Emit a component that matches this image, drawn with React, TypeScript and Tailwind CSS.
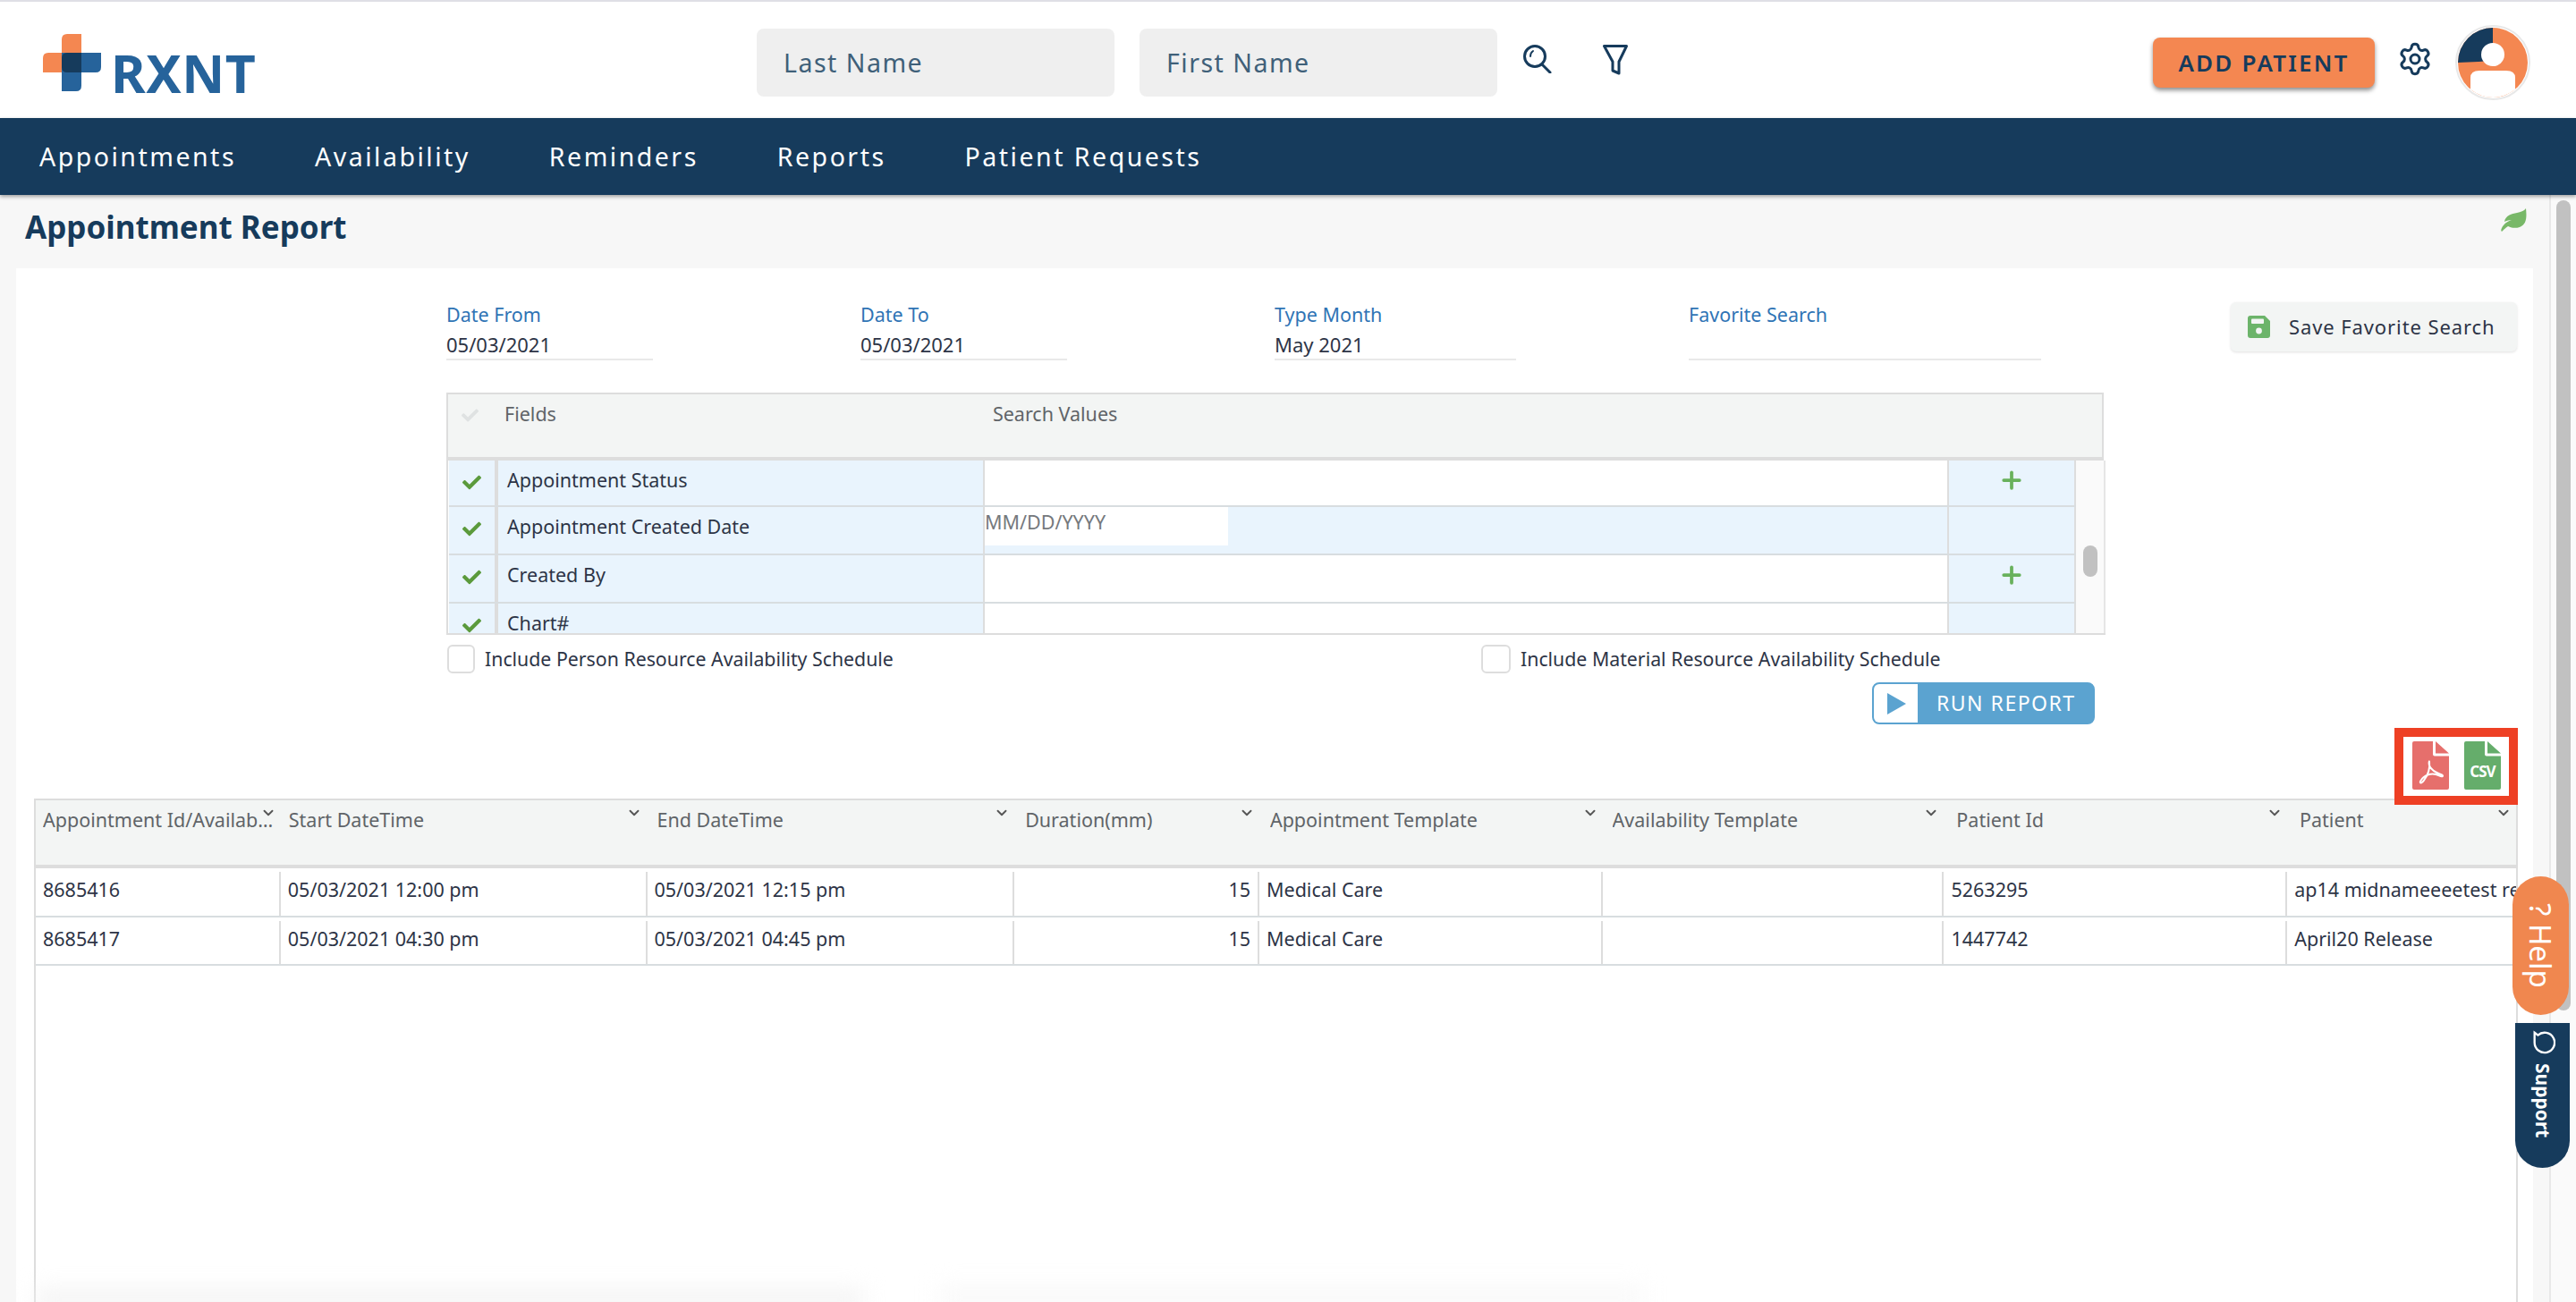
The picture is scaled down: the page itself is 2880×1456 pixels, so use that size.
import { ChevronDown, Plus, Settings } from "lucide-react";
import { FaCheck } from "react-icons/fa";

const dataCols = [
    { title: "Appointment Id/Availability", width: "w-[274px]", pad: "pl-[8px]" },
    { title: "Start DateTime", width: "w-[410px]", pad: "pl-[9px]" },
    { title: "End DateTime", width: "w-[411px]", pad: "pl-[11px]" },
    { title: "Duration(mm)", width: "w-[274px]", pad: "pl-[12px]" },
    { title: "Appointment Template", width: "w-[384px]", pad: "pl-[12px]" },
    { title: "Availability Template", width: "w-[382px]", pad: "pl-[11px]" },
    { title: "Patient Id", width: "w-[384px]", pad: "pl-[14px]" },
    { title: "Patient", width: "w-[256px]", pad: "pl-[14px]" },
];

const dataRows = [
    ["8685416", "05/03/2021 12:00 pm", "05/03/2021 12:15 pm", "15", "Medical Care", "", "5263295", "ap14 midnameeeetest review"],
    ["8685417", "05/03/2021 04:30 pm", "05/03/2021 04:45 pm", "15", "Medical Care", "", "1447742", "April20 Release"],
];

const searchRows = [
    { name: "Appointment Status", add: true, date: false, height: "h-[52px]" },
    { name: "Appointment Created Date", add: false, date: true, height: "h-[54px]" },
    { name: "Created By", add: true, date: false, height: "h-[54px]" },
    { name: "Chart#", add: false, date: false, height: "h-[54px]" },
];

const navItems = ["Appointments", "Availability", "Reminders", "Reports", "Patient Requests"];

const Field = ({ label, value, width, col }: { label: string; value: string; width: string; col: string }) => (
    <div className={col}>
        <div className={width}>
            <p className="h-[26px] text-[21.5px] leading-[26px] text-[#2f74b5]">{label}</p>
            <p className="mt-[4px] h-[34px] border-b-2 border-[#e9e9e9] text-[22px] leading-[32px] text-[#2d3446]">{value}</p>
        </div>
    </div>
);

const Logo = () => (
    <div className="flex items-end">
        <svg width="65" height="64" viewBox="0 0 65 64">
            <path d="M21 21V6Q21 0 27 0H43V43H0V27Q0 21 6 21Z" fill="#f48751" />
            <path d="M21 21H65V37Q65 43 59 43H43V58Q43 64 37 64H21Z" fill="#26639b" />
            <path d="M27 21H43V43H27Q21 43 21 37V27Q21 21 27 21Z" fill="#163b5c" />
        </svg>
        <span className="ml-[11px] h-[42px] text-[59px] leading-[42px] font-bold tracking-[0.5px] text-[#26639b]">RXNT</span>
    </div>
);

const SearchIcon = () => (
    <svg width="32" height="32" viewBox="0 0 32 32" fill="none" stroke="#163b5c" strokeWidth="3" strokeLinecap="round">
        <circle cx="13" cy="13" r="11.5" />
        <path d="M21 22L30 31" />
        <path d="M8 13Q8 9 11 7" strokeWidth="2" />
    </svg>
);

const FilterIcon = () => (
    <svg width="28" height="34" viewBox="0 0 28 34" fill="none" stroke="#163b5c" strokeWidth="3" strokeLinejoin="round">
        <path d="M1.5 1.5H26.5L18 19V32L11 29V19Z" />
    </svg>
);

const LeafIcon = () => (
    <svg width="30" height="26" viewBox="0 0 30 26">
        <path
            d="M28 0C29 10 29 18 21 21C15 23 10 21 8 20C5 22 3 24 1 26C0 25 0 24 1 22C3 18 6 15 12 13C8 13 6 14 4 15C5 8 12 6 18 5C22 4 26 3 28 0Z"
            fill="#78b868"
        />
    </svg>
);

const SaveIcon = () => (
    <svg width="25" height="25" viewBox="0 0 25 25">
        <path d="M3 0H19L25 6V22Q25 25 22 25H3Q0 25 0 22V3Q0 0 3 0Z" fill="#6cb46a" />
        <rect x="4" y="3.5" width="14" height="5.5" rx="1" fill="#f3f5f4" />
        <circle cx="12.5" cy="17" r="3.4" fill="#f3f5f4" />
    </svg>
);

const Avatar = () => (
    <svg width="84" height="86" viewBox="0 0 84 86">
        <circle cx="42" cy="43" r="41" fill="#fff" stroke="#e8e8e8" strokeWidth="2" />
        <circle cx="42" cy="43" r="39" fill="#f48751" />
        <path d="M42 4A39 39 0 0 0 3 43L26 42Q42 42 42 30Z" fill="#163b5c" />
        <ellipse cx="42" cy="34" rx="13" ry="13" fill="#fff" />
        <path d="M17 73V60Q17 52 27 52H57Q67 52 67 60V73Q55 82 42 82Q29 82 17 73Z" fill="#fff" />
    </svg>
);

const PdfIcon = () => (
    <svg width="41" height="54" viewBox="0 0 41 52" preserveAspectRatio="none">
        <path d="M2 0H23V14Q23 16 25 16H41V50Q41 52 39 52H2Q0 52 0 50V2Q0 0 2 0Z" fill="#e66f6c" />
        <path d="M26 0L41 13H26Z" fill="#e66f6c" />
        <path d="M19 21C17 27 23 33 33 36C35 37 34 39 30 37C22 33 13 36 9 43C8 46 11 45 13 42C17 37 20 29 19 21Z" fill="none" stroke="#fff" strokeWidth="2" />
    </svg>
);

const CsvIcon = () => (
    <div className="relative h-[54px] w-[41px]">
        <svg width="41" height="54" viewBox="0 0 41 52" preserveAspectRatio="none">
            <path d="M2 0H23V14Q23 16 25 16H41V50Q41 52 39 52H2Q0 52 0 50V2Q0 0 2 0Z" fill="#65ad6b" />
            <path d="M26 0L41 13H26Z" fill="#65ad6b" />
        </svg>
        <span className="absolute left-0 top-[24px] w-full text-center text-[17px] leading-[20px] font-bold tracking-[-1px] text-white">CSV</span>
    </div>
);

export default function App() {
    return (
        <div className="relative flex h-[1456px] w-[2880px] flex-col overflow-hidden bg-[#f7f7f7] font-['Noto_Sans',sans-serif] text-[#2d3446]">
            <div className="h-[2px] bg-[#dfdfe6]" />

            {/* header */}
            <header className="flex h-[130px] items-center bg-white pt-[6px]">
                <div className="ml-[48px] w-[798px]">
                    <Logo />
                </div>
                <div className="flex h-[76px] w-[400px] items-center rounded-lg bg-[#efefef] pl-[30px] text-[28.5px] tracking-[1.5px] text-[#3f6079]">Last Name</div>
                <div className="ml-[28px] flex h-[76px] w-[400px] items-center rounded-lg bg-[#efefef] pl-[30px] text-[28.5px] tracking-[1.5px] text-[#3f6079]">First Name</div>
                <div className="-mt-[7px] ml-[29px] flex items-start gap-[57px]">
                    <SearchIcon />
                    <FilterIcon />
                </div>
                <div className="ml-[587px] flex h-[56px] w-[248px] items-center justify-center rounded-lg bg-[#f48751] text-[26px] font-semibold tracking-[2.2px] text-[#163b5c] shadow-[0_3px_5px_rgba(0,0,0,0.45)]">ADD PATIENT</div>
                <Settings className="-mt-[8px] ml-[25px] text-[#163b5c]" size={40} strokeWidth={1.8} />
                <div className="ml-[25px]">
                    <Avatar />
                </div>
            </header>

            {/* nav */}
            <nav className="z-10 flex h-[86px] items-center gap-[88px] bg-[#163b5c] pl-[44px] text-[28.5px] tracking-[2.5px] text-white shadow-[0_2px_4px_rgba(0,0,0,0.35)]">
                {navItems.map((item) => (
                    <span key={item}>{item}</span>
                ))}
            </nav>

            <div className="flex min-h-0 flex-1">
                <main className="flex w-[2850px] flex-col">
                    <div className="flex h-[82px] items-start justify-between pl-[28px] pr-[24px]">
                        <h1 className="mt-[14px] text-[35px] leading-[44px] font-bold text-[#163b5c]">Appointment Report</h1>
                        <div className="mt-[15px]">
                            <LeafIcon />
                        </div>
                    </div>

                    <section className="relative ml-[18px] flex w-[2814px] flex-1 flex-col overflow-hidden bg-white">
                        {/* filter fields */}
                        <div className="flex pt-[39px] pl-[481px]">
                            <Field col="w-[463px]" width="w-[231px]" label="Date From" value="05/03/2021" />
                            <Field col="w-[463px]" width="w-[231px]" label="Date To" value="05/03/2021" />
                            <Field col="w-[463px]" width="w-[270px]" label="Type Month" value="May 2021" />
                            <Field col="w-[606px]" width="w-[394px]" label="Favorite Search" value="" />
                            <button className="-mt-[1px] flex h-[55px] w-[320px] items-center gap-[21px] rounded-md bg-[#f3f5f4] pl-[19px] text-[22px] tracking-[0.9px] text-[#2d3446] shadow-[0_1px_3px_rgba(0,0,0,0.12)]">
                                <SaveIcon />
                                Save Favorite Search
                            </button>
                        </div>

                        {/* search table */}
                        <div className="ml-[481px] mt-[36px] w-[1855px] text-[21.5px]">
                            <div className="flex h-[76px] w-[1853px] items-start border-2 border-b-4 border-[#dddddd] bg-[#f3f5f4] text-[#606468]">
                                <FaCheck className="ml-[15px] mt-[14px] text-[#dfe2e2]" size={19} />
                                <span className="ml-[29px] mt-[6px]">Fields</span>
                                <span className="ml-[488px] mt-[6px]">Search Values</span>
                            </div>
                            <div className="flex h-[195px] overflow-hidden border-b-2 border-l-2 border-[#dddddd] pl-[1px]">
                                <div className="w-[1819px]">
                                    {searchRows.map((row) => (
                                        <div key={row.name} className={`grid grid-cols-[55px_544px_1076px_144px] border-b-2 border-[#d8dde0] ${row.height}`}>
                                            <div className="flex justify-center border-r-4 border-[#dddddd] bg-[#e9f4fd] pt-[14px]">
                                                <FaCheck className="text-[#5b9a3c]" size={21} />
                                            </div>
                                            <div className="border-r-2 border-[#dddddd] bg-[#e9f4fd] pl-[10px] pt-[4px] leading-[36px]">{row.name}</div>
                                            {row.date ? (
                                                <div className="bg-[#e9f4fd]">
                                                    <div className="h-[43px] w-[272px] bg-white pt-[2px] leading-[30px] text-[#75797d]">MM/DD/YYYY</div>
                                                </div>
                                            ) : (
                                                <div className="bg-white" />
                                            )}
                                            <div className="flex justify-center border-l-2 border-r-2 border-[#dddddd] bg-[#e9f4fd] pt-[7px]">
                                                {row.add && <Plus className="text-[#68b15c]" size={30} strokeWidth={3} />}
                                            </div>
                                        </div>
                                    ))}
                                </div>
                                <div className="w-[33px] border-r-2 border-[#e6e6e6] bg-[#fafafa] pl-[8px] pt-[95px]">
                                    <div className="h-[35px] w-[16px] rounded-full bg-[#c1c1c1]" />
                                </div>
                            </div>
                        </div>

                        {/* checkboxes */}
                        <div className="mt-[11px] ml-[482px] flex h-[32px] items-center text-[21.3px]">
                            <div className="flex w-[1156px] items-center">
                                <span className="h-[32px] w-[31px] rounded-md border-2 border-[#dddddd]" />
                                <span className="ml-[11px]">Include Person Resource Availability Schedule</span>
                            </div>
                            <span className="h-[32px] w-[33px] rounded-md border-2 border-[#dddddd]" />
                            <span className="ml-[11px]">Include Material Resource Availability Schedule</span>
                        </div>

                        <div className="ml-[2075px] mt-[10px] flex h-[47px] w-[249px] overflow-hidden rounded-lg border-2 border-[#5ba3d0] bg-[#5ba3d0]">
                            <div className="flex w-[49px] items-center justify-center bg-white">
                                <svg width="22" height="24" viewBox="0 0 22 24">
                                    <path d="M1 0L22 12L1 24Z" fill="#5ba3d0" />
                                </svg>
                            </div>
                            <span className="ml-[21px] text-[23px] leading-[43px] tracking-[1.5px] text-white">RUN REPORT</span>
                        </div>

                        {/* export icons */}
                        <div className="relative z-10 mr-[17px] mt-[4px] flex h-[86px] w-[138px] items-start gap-[17px] self-end border-[10px] border-[#ee4024] bg-white pl-[10px] pt-[5px]">
                            <PdfIcon />
                            <CsvIcon />
                        </div>

                        {/* data table */}
                        <div className="-mt-[7px] ml-[20px] flex w-[2777px] flex-1 flex-col overflow-hidden border-l-2 border-r-2 border-[#dddddd] text-[21.5px]">
                            <div className="flex h-[78px] border-t-2 border-b-4 border-[#dddddd] bg-[#f3f5f4] text-[#606468]">
                                {dataCols.map((col) => (
                                    <div key={col.title} className={`relative ${col.width} ${col.pad} pt-[7px]`}>
                                        <p className="w-[260px] truncate leading-[30px]">{col.title}</p>
                                        <ChevronDown className="absolute right-[5px] top-[5px] text-[#555555]" size={18} strokeWidth={2.5} />
                                    </div>
                                ))}
                            </div>
                            {dataRows.map((row) => (
                                <div key={row[0]} className="flex h-[54.5px] border-b-2 border-[#d8dde0] pt-[4px]">
                                    {row.map((cell, i) => (
                                        <div
                                            key={i}
                                            className={`${dataCols[i].width} overflow-hidden whitespace-nowrap border-r-2 border-[#dddddd] pl-[8px] pt-[3px] leading-[34px] last:border-r-0 ${i === 3 ? "pr-[8px] text-right" : ""}`}
                                        >
                                            {cell}
                                        </div>
                                    ))}
                                </div>
                            ))}
                        </div>

                        {/* faint shadows at the bottom of the picture */}
                        <div className="pointer-events-none absolute -bottom-[8px] left-[22px] h-[22px] w-[925px] bg-[#f3f3f3] blur-md" />
                        <div className="pointer-events-none absolute -bottom-[8px] left-[1030px] h-[26px] w-[790px] bg-[#f9f9f9] blur-md" />
                    </section>
                </main>

                {/* page scrollbar */}
                <div className="w-[30px] border-l-2 border-[#e8e8e8] bg-[#fafafa] pl-[6px] pt-[6px]">
                    <div className="h-[906px] w-[16px] rounded-full bg-[#c1c1c1]" />
                </div>
            </div>

            {/* floating tabs */}
            <div className="absolute left-[2809px] top-[980px] z-20 flex h-[155px] w-[63px] items-center justify-center rounded-full bg-[#f0874f] text-[33px] leading-none text-white [writing-mode:vertical-rl]">
                <span>? Help</span>
            </div>
            <div className="absolute left-[2812px] top-[1144px] z-20 flex h-[162px] w-[61px] flex-col items-center rounded-b-full bg-[#163b5c] pt-[8px] text-[21px] leading-none font-bold text-white">
                <svg width="28" height="28" viewBox="0 0 30 30" fill="none" stroke="#fff" strokeWidth="2.5">
                    <path d="M5 3L9 6A12 12 0 1 1 5 15Q5 9 5 3Z" />
                </svg>
                <span className="mt-[9px] [writing-mode:vertical-rl]">Support</span>
            </div>
        </div>
    );
}
